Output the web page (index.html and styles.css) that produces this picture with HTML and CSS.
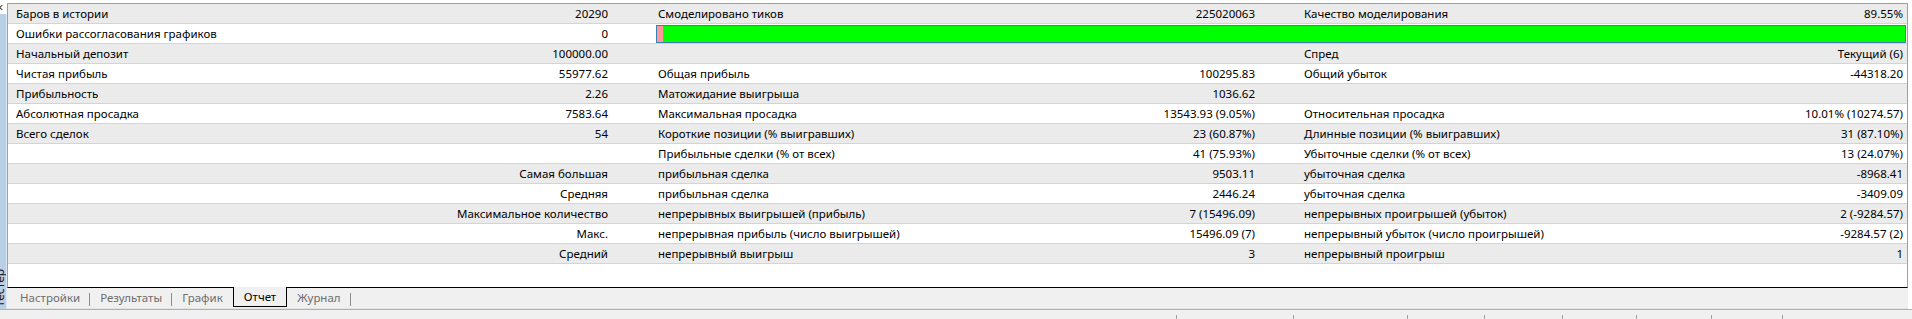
FILE: index.html
```html
<!DOCTYPE html>
<html lang="ru">
<head>
<meta charset="utf-8">
<title>Тестер — Отчет</title>
<link rel="stylesheet" href="styles.css">
</head>
<body>
<div class="app">
  <div class="main">
    <div class="side">
      <span class="close">×</span>
      <div class="strip"><span class="side-label">Тестер</span></div>
    </div>
    <div class="content">
      <div class="panel">
        <div class="rows">
          <div class="row gray"><span class="lab">Баров в истории</span><span class="val v1">20290</span><span class="lab l2">Смоделировано тиков</span><span class="val v2">225020063</span><span class="lab l3">Качество моделирования</span><span class="val v3">89.55%</span></div>
          <div class="row"><span class="lab">Ошибки рассогласования графиков</span><span class="val v1">0</span><div class="bar-cell"><div class="bar"><div class="bar-err"></div><div class="bar-ok"></div></div></div></div>
          <div class="row gray"><span class="lab">Начальный депозит</span><span class="val v1">100000.00</span><span class="lab l2"></span><span class="val v2"></span><span class="lab l3">Спред</span><span class="val v3">Текущий (6)</span></div>
          <div class="row"><span class="lab">Чистая прибыль</span><span class="val v1">55977.62</span><span class="lab l2">Общая прибыль</span><span class="val v2">100295.83</span><span class="lab l3">Общий убыток</span><span class="val v3">-44318.20</span></div>
          <div class="row gray"><span class="lab">Прибыльность</span><span class="val v1">2.26</span><span class="lab l2">Матожидание выигрыша</span><span class="val v2">1036.62</span><span class="lab l3"></span><span class="val v3"></span></div>
          <div class="row"><span class="lab">Абсолютная просадка</span><span class="val v1">7583.64</span><span class="lab l2">Максимальная просадка</span><span class="val v2">13543.93 (9.05%)</span><span class="lab l3">Относительная просадка</span><span class="val v3">10.01% (10274.57)</span></div>
          <div class="row gray"><span class="lab">Всего сделок</span><span class="val v1">54</span><span class="lab l2">Короткие позиции (% выигравших)</span><span class="val v2">23 (60.87%)</span><span class="lab l3">Длинные позиции (% выигравших)</span><span class="val v3">31 (87.10%)</span></div>
          <div class="row"><span class="lab"></span><span class="val v1"></span><span class="lab l2">Прибыльные сделки (% от всех)</span><span class="val v2">41 (75.93%)</span><span class="lab l3">Убыточные сделки (% от всех)</span><span class="val v3">13 (24.07%)</span></div>
          <div class="row gray"><span class="lab"></span><span class="val v1">Самая большая</span><span class="lab l2">прибыльная сделка</span><span class="val v2">9503.11</span><span class="lab l3">убыточная сделка</span><span class="val v3">-8968.41</span></div>
          <div class="row"><span class="lab"></span><span class="val v1">Средняя</span><span class="lab l2">прибыльная сделка</span><span class="val v2">2446.24</span><span class="lab l3">убыточная сделка</span><span class="val v3">-3409.09</span></div>
          <div class="row gray"><span class="lab"></span><span class="val v1">Максимальное количество</span><span class="lab l2">непрерывных выигрышей (прибыль)</span><span class="val v2">7 (15496.09)</span><span class="lab l3">непрерывных проигрышей (убыток)</span><span class="val v3">2 (-9284.57)</span></div>
          <div class="row"><span class="lab"></span><span class="val v1">Макс.</span><span class="lab l2">непрерывная прибыль (число выигрышей)</span><span class="val v2">15496.09 (7)</span><span class="lab l3">непрерывный убыток (число проигрышей)</span><span class="val v3">-9284.57 (2)</span></div>
          <div class="row gray"><span class="lab"></span><span class="val v1">Средний</span><span class="lab l2">непрерывный выигрыш</span><span class="val v2">3</span><span class="lab l3">непрерывный проигрыш</span><span class="val v3">1</span></div>
        </div>
      </div>
      <div class="tabs">
        <span class="tab sep">Настройки</span>
        <span class="tab sep">Результаты</span>
        <span class="tab">График</span>
        <span class="tab active">Отчет</span>
        <span class="tab sep">Журнал</span>
      </div>
    </div>
  </div>
  <div class="status">
    <span class="seg seg-wide"></span>
    <span class="seg" style="width:117px"></span>
    <span class="seg" style="width:114px"></span>
    <span class="seg" style="width:77px"></span>
    <span class="seg" style="width:78px"></span>
    <span class="seg" style="width:74px"></span>
    <span class="seg" style="width:75px"></span>
    <span class="seg" style="width:71px"></span>
    <span class="seg seg-last"></span>
  </div>
</div>
</body>
</html>
```
FILE: styles.css
```css
* { box-sizing: border-box; }
html, body {
  margin: 0;
  padding: 0;
  background: #ffffff;
}
body {
  width: 1912px;
  height: 319px;
  overflow: hidden;
  font-family: "Noto Sans", "Open Sans", sans-serif;
  font-size: 11.5px;
  color: #000;
}
.app {
  display: flex;
  flex-direction: column;
  height: 319px;
}
.main {
  display: flex;
  height: 310px;
}
.side {
  width: 7px;
  display: flex;
  flex-direction: column;
  overflow: hidden;
  position: relative;
}
.close {
  height: 14px;
  font-size: 13px;
  line-height: 14px;
  margin-left: -4px;
  color: #333;
}
.strip {
  flex: 1;
  background: #b9cfe8;
  border-right: 1px solid #dde7f2;
  position: relative;
  overflow: hidden;
}
.side-label {
  position: absolute;
  left: 6px;
  bottom: 2px;
  transform: rotate(-90deg);
  transform-origin: left bottom;
  font-size: 12px;
  line-height: 12px;
  color: #1a1a1a;
  white-space: nowrap;
}
.content {
  width: 1901px;
  display: flex;
  flex-direction: column;
  padding-top: 3px;
}
.panel {
  height: 285px;
  border: 1px solid #a0a0a0;
  border-bottom: 1px solid #000;
  background: #fff;
}
.row {
  display: grid;
  grid-template-columns: 322px 320px 330px 316px 324px 1fr;
  height: 20px;
  border-bottom: 1px solid #d4d4d4;
  line-height: 19px;
  white-space: nowrap;
}
.row.gray { background: #ebebeb; }
.lab { padding-left: 8px; overflow: hidden; }
.val { text-align: right; }
.v1 { padding-right: 42px; }
.v2 { padding-right: 41px; }
.v3 { padding-right: 4px; }
.bar-cell {
  grid-column: 3 / 7;
  padding: 1px 1px 0 6px;
}
.bar {
  height: 18px;
  border: 1px solid #3c7fb1;
  display: flex;
}
.bar-err { width: 6px; background: #ff9a9a; }
.bar-ok { flex: 1; background: #00ff00; }
.tabs {
  height: 21px;
  background: #f0f0f0;
  display: flex;
  align-items: flex-start;
  padding-left: 3px;
  border-bottom: 1px solid #e3e3e3;
  font-size: 11.5px;
}
.tab {
  height: 18px;
  margin-top: 1px;
  padding: 0 10px;
  line-height: 18px;
  color: #6d6d6d;
  position: relative;
}
.tab.sep::after {
  content: "";
  position: absolute;
  right: 0;
  top: 4px;
  height: 13px;
  border-right: 1px solid #8c8c8c;
}
.tab.active {
  margin-top: -1px;
  height: 20px;
  line-height: 20px;
  color: #000;
  border: 1px solid #000;
  border-top: none;
  background: #f0f0f0;
}
.status {
  flex: 1;
  display: flex;
  background: #f0f0f0;
  border-top: 1px solid #b0b0b0;
  padding-top: 5px;
}
.seg {
  height: 4px;
  border-right: 1px solid #a0a0a0;
}
.seg-wide { width: 1177px; }
.seg-last { flex: 1; border-right: none; }
```
